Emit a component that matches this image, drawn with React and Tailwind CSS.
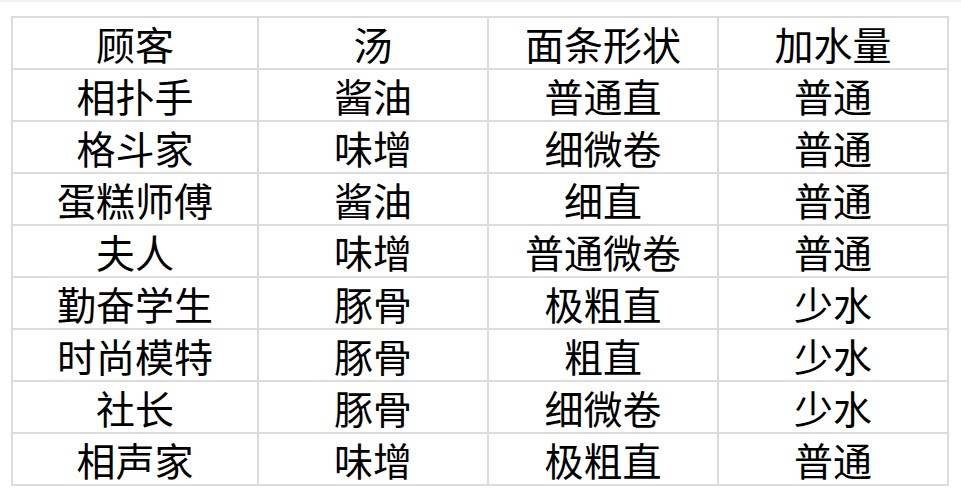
import React from 'react';

const rows = [
  ['顾客', '汤', '面条形状', '加水量'],
  ['相扑手', '酱油', '普通直', '普通'],
  ['格斗家', '味增', '细微卷', '普通'],
  ['蛋糕师傅', '酱油', '细直', '普通'],
  ['夫人', '味增', '普通微卷', '普通'],
  ['勤奋学生', '豚骨', '极粗直', '少水'],
  ['时尚模特', '豚骨', '粗直', '少水'],
  ['社长', '豚骨', '细微卷', '少水'],
  ['相声家', '味增', '极粗直', '普通'],
];

const widths = ['w-[246px]', 'w-[230px]', 'w-[230px]', 'w-[230px]'];

function App() {
  return (
    <div
      className="w-[961px] h-[499px] bg-white border-t-2 border-[#f0f0f0] pt-[14px] pl-[11px]"
      style={{ fontFamily: '"Noto Sans CJK SC", "Noto Sans", sans-serif' }}
    >
      <table className="border-collapse border-2 border-[#dcdcdc] text-black">
        <tbody>
          {rows.map((row, i) => (
            <tr key={i} className="h-[52px]">
              {row.map((cell, j) => (
                <td
                  key={j}
                  className={`${widths[j]} border-2 border-[#dcdcdc] text-center text-[39px] leading-none p-0`}
                >
                  {cell}
                </td>
              ))}
            </tr>
          ))}
        </tbody>
      </table>
    </div>
  );
}

export default App;
